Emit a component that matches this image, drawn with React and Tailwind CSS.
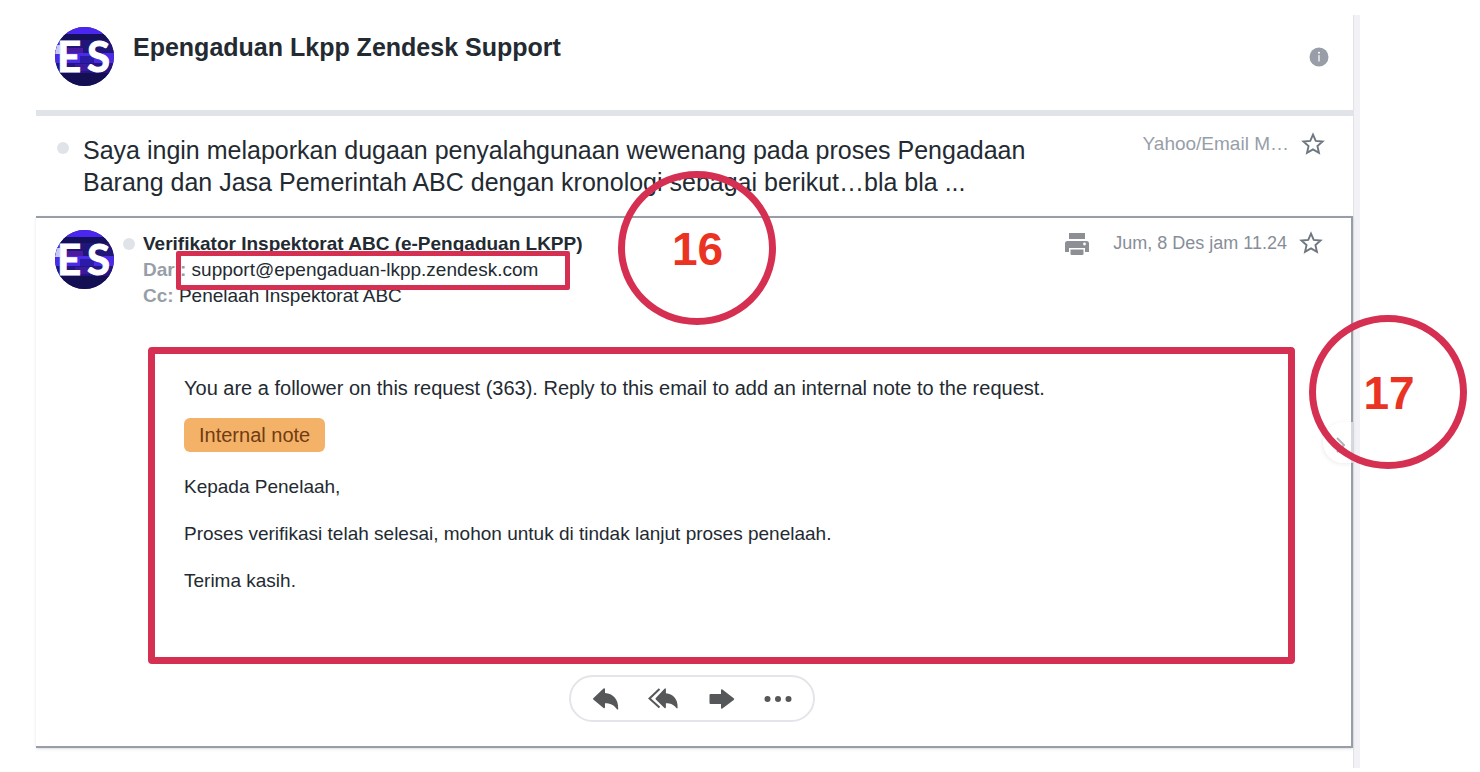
import React from 'react';
import { clsx } from 'clsx';

const STAR = 'M12 2.6l2.75 6.3 6.85.65-5.15 4.6 1.5 6.75L12 17.4l-5.95 3.5 1.5-6.75-5.15-4.6 6.85-.65z';

function Avatar({ id }) {
  return (
    <svg viewBox="0 0 60 60" className="size-[60px] shrink-0" role="img" aria-label="ES">
      <defs>
        <clipPath id={id}>
          <circle cx="29.500" cy="29.500" r="29.500" />
        </clipPath>
      </defs>
      <g clipPath={`url(#${id})`}>
        <rect width="60" height="60" fill="#1b1368" />
        <rect width="60" height="7" fill="#4a26f0" />
        <rect y="7" width="60" height="6" fill="#15105c" />
        <rect y="13" width="60" height="13" fill="#201578" />
        <rect y="14" width="5" height="12" fill="#4a26f0" />
        <rect x="12" y="21" width="16" height="7" fill="#4a1aa0" />
        <rect y="26" width="60" height="10" fill="#4a2be6" />
        <rect y="18" width="5" height="9" fill="#c9c6f5" />
        <rect x="25" y="29" width="14" height="8" fill="#2c1ba8" />
        <rect y="36" width="60" height="10" fill="#231683" />
        <rect x="20" y="37" width="14" height="7" fill="#3b1a9e" />
        <rect y="46" width="60" height="14" fill="#130f52" />
      </g>
      <text x="2" y="45" fill="#fff" stroke="#fff" strokeWidth="1" fontFamily="Lato, sans-serif" fontWeight="700" fontSize="42">E</text>
      <text x="32" y="45" fill="#fff" stroke="#fff" strokeWidth="1" fontFamily="Lato, sans-serif" fontWeight="700" fontSize="42">S</text>
    </svg>
  );
}

function StarButton() {
  return (
    <button type="button" aria-label="Star" className="shrink-0 cursor-pointer">
      <svg viewBox="0 0 24 24" className="size-6" fill="none" stroke="#6e7780" strokeWidth="1.9">
        <path d={STAR} />
      </svg>
    </button>
  );
}

function PrintIcon() {
  return (
    <svg viewBox="0 0 24 24" className="size-6" fill="#8c8f94">
      <path d="M4 1h16v6H4z" />
      <path d="M2.500 9h19A2.500 2.500 0 0 1 24 11.500V20h-4v-4H4v4H0v-8.500A2.500 2.500 0 0 1 2.500 9z" />
      <path d="M5.500 17.500h13V22a1 1 0 0 1-1 1h-11a1 1 0 0 1-1-1z" />
      <circle cx="19.500" cy="12" r="1.400" fill="#fff" />
    </svg>
  );
}

function ReplyIcon() {
  return (
    <svg viewBox="0 0 30 24" className="h-6 w-[30px]" fill="#555759">
      <path d="M2.300 11.200L12.500 1.500q1.400-1 1.500.7V6C22 6.500 27.500 12 27.200 22q-.2 1.400-1.200.3C22.500 17.500 19 16.200 14 16.200v4q-.2 1.700-1.500.7L2.300 12.600q-.8-.7 0-1.400z" />
    </svg>
  );
}

function ReplyAllIcon() {
  return (
    <svg viewBox="0 0 30 24" className="h-6 w-[30px]" fill="#555759">
      <path d="M11.500 2L1.500 11.500l10 9" fill="none" stroke="#555759" strokeWidth="2" />
      <path d="M7.800 11L16.500 1.700q1.200-1 1.400.6V6.300C25 6.800 30 12 29.600 20.700q-.3 1.400-1.300.3C25.500 17.500 22.500 16.200 17.900 16.200v4q-.2 1.700-1.400.7L7.800 12.400q-.7-.7 0-1.400z" />
    </svg>
  );
}

function ForwardIcon() {
  return (
    <svg viewBox="0 0 30 24" className="h-6 w-[30px]" fill="#555759">
      <path d="M5.500 7H16V3q.2-1.300 1.400-.5l11.300 8.700q1 .9 0 1.700L17.400 21.400q-1.200.8-1.400-.5V17H5.500Q4.500 17 4.500 16V8q0-1 1-1z" />
    </svg>
  );
}

function MoreIcon() {
  return (
    <svg viewBox="0 0 30 24" className="h-6 w-[30px]" fill="#555759">
      <circle cx="5.500" cy="12" r="3" />
      <circle cx="16" cy="12" r="3" />
      <circle cx="26.500" cy="12" r="3" />
    </svg>
  );
}

const actions = [
  { label: 'Reply', Icon: ReplyIcon },
  { label: 'Reply all', Icon: ReplyAllIcon },
  { label: 'Forward', Icon: ForwardIcon },
  { label: 'More', Icon: MoreIcon }
];

// Numbered step marker drawn over the mail view
function StepMarker({ number, className }) {
  return (
    <div
      className={clsx(
        'absolute z-10 flex h-[154px] w-[158px] items-center justify-center rounded-[50%] border-[7px] border-[#d52f52] pt-0.5 pl-0.5 text-[46px] leading-none font-bold text-[#ea3323]',
        className
      )}
    >
      {number}
    </div>
  );
}

export default function App() {
  return (
    <div className="bg-white pt-[15px] pr-[120px] pb-[5px] pl-9 font-['Liberation_Sans',Arial,sans-serif] text-[#232a31]">
      <main className="border-r-[6px] border-[#f1f1f6]">
        <div className="border-r border-[#e0e4e9] pb-5">
          {/* Conversation header */}
          <header className="flex h-[101px] items-start border-b-[6px] border-[#e0e4e9] pt-3 pr-6 pl-[19px]">
            <Avatar id="avatar-header" />
            <h1 className="ml-[18px] flex-1 pt-1 text-[25px] leading-8 font-bold">Epengaduan Lkpp Zendesk Support</h1>
            <button type="button" aria-label="Info" className="mt-5 cursor-pointer">
              <svg viewBox="0 0 20 20" className="size-5">
                <circle cx="10" cy="10" r="9.500" fill="#979ea8" />
                <circle cx="10" cy="5.800" r="1" fill="#fff" />
                <path d="M10 8.500v5.500" stroke="#fff" strokeWidth="1.200" strokeLinecap="round" />
              </svg>
            </button>
          </header>

          {/* Collapsed message */}
          <section className="flex h-[100px] items-start pt-4 pr-7 pl-[21px]">
            <span className="mt-[10px] size-3 shrink-0 rounded-full bg-[#e0e4e9]" />
            <p className="ml-[14px] pt-0.5 text-[25px] leading-8">
              Saya ingin melaporkan dugaan penyalahgunaan wewenang pada proses Pengadaan
              <br />
              Barang dan Jasa Pemerintah ABC dengan kronologi sebagai berikut…bla bla ...
            </p>
            <div className="ml-auto flex items-center gap-3 whitespace-nowrap text-[#979ea8]">
              <span className="text-[19px] leading-6">Yahoo/Email M…</span>
              <StarButton />
            </div>
          </section>

          {/* Open message */}
          <article className="relative border-y-2 border-r-2 border-[#979ea8] pb-6 shadow-sm">
            <div className="flex items-start pt-3 pr-7 pl-[19px]">
              <Avatar id="avatar-message" />
              <span className="mt-2 ml-2 size-3 shrink-0 rounded-full bg-[#e0e4e9]" />
              <div className="ml-2 pt-px text-[19px] leading-[26px]">
                <h2 className="font-bold">Verifikator Inspektorat ABC (e-Pengaduan LKPP)</h2>
                <p>
                  <span className="font-bold text-[#979ea8]">Dari:</span>{' '}
                  <span className="relative">
                    support@epengaduan-lkpp.zendesk.com
                    <span className="absolute -top-2 -right-8 -bottom-[10px] -left-4 rounded-xs border-5 border-[#d52f52]" />
                  </span>
                </p>
                <p>
                  <span className="font-bold text-[#979ea8]">Cc:</span> Penelaah Inspektorat ABC
                </p>
              </div>
              <div className="ml-auto flex items-center gap-3 whitespace-nowrap">
                <button type="button" aria-label="Print" className="mt-0.5 mr-3 cursor-pointer">
                  <PrintIcon />
                </button>
                <time className="text-[18px] leading-6 text-[#878e98]">Jum, 8 Des jam 11.24</time>
                <StarButton />
              </div>
            </div>

            <div className="mt-[38px] mr-14 ml-28 flex h-[317px] flex-col items-start gap-[23px] rounded-sm border-[7px] border-[#d52f52] px-[29px] pt-[22px] text-[19px] leading-6">
              <p className="text-xl leading-6">
                You are a follower on this request (363). Reply to this email to add an internal note to the request.
              </p>
              <span className="-mt-[5px] rounded-md bg-[#f3b267] px-[15px] py-[5px] text-xl leading-6 text-[#703b15]">
                Internal note
              </span>
              <p>Kepada Penelaah,</p>
              <p>Proses verifikasi telah selesai, mohon untuk di tindak lanjut proses penelaah.</p>
              <p>Terima kasih.</p>
            </div>

            <div className="mt-[11px] mr-1 flex justify-center">
              <div className="flex h-[47px] w-[246px] items-center justify-between rounded-full border-2 border-[#e3e5ea] px-5">
                {actions.map(({ label, Icon }) => (
                  <button key={label} type="button" aria-label={label} className="cursor-pointer">
                    <Icon />
                  </button>
                ))}
              </div>
            </div>

            <button
              type="button"
              aria-label="Next"
              className="absolute top-[204px] -right-[2px] flex h-[41px] w-[30px] cursor-pointer items-center rounded-l-full bg-white/60 pt-1 pl-[13px] shadow-[-1px_1px_4px_rgba(0,0,0,0.08)]"
            >
              <svg viewBox="0 0 9 16" className="h-4 w-[9px]" fill="none" stroke="#b0b3b9" strokeWidth="2">
                <path d="M1 1l7 7-7 7" />
              </svg>
            </button>

            <StepMarker number={16} className="top-[-47px] left-1/2 -ml-[76px]" />
            <StepMarker number={17} className="top-[97px] -right-[116px]" />
          </article>
        </div>
      </main>
    </div>
  );
}
